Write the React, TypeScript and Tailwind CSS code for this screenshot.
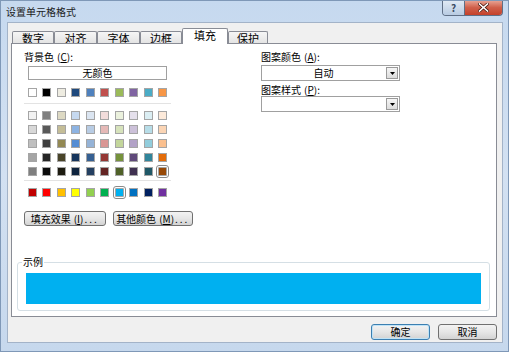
import React from 'react';

// Office 2007 theme palette, as shown in the fill tab
const themeRow = ['#ffffff', '#000000', '#eeece1', '#1f497d', '#4f81bd', '#c0504d', '#9bbb59', '#8064a2', '#4bacc6', '#f79646'];

const tintRows = [
  ['#f2f2f2', '#7f7f7f', '#ddd9c3', '#c6d9f0', '#dbe5f1', '#f2dcdb', '#ebf1dd', '#e5e0ec', '#dbeef3', '#fdeada'],
  ['#d8d8d8', '#595959', '#c4bd97', '#8db3e2', '#b8cce4', '#e5b9b7', '#d7e3bc', '#ccc1d9', '#b7dde8', '#fbd5b5'],
  ['#bfbfbf', '#3f3f3f', '#938953', '#548dd4', '#95b3d7', '#d99694', '#c3d69b', '#b2a2c7', '#92cddc', '#fac08f'],
  ['#a5a5a5', '#262626', '#494429', '#17365d', '#366092', '#953734', '#76923c', '#5f497a', '#31859b', '#e36c09'],
  ['#7f7f7f', '#0c0c0c', '#1d1b10', '#0f243e', '#244061', '#632423', '#4f6128', '#3f3151', '#205867', '#974806'],
];

const standardRow = ['#c00000', '#ff0000', '#ffc000', '#ffff00', '#92d050', '#00b050', '#00b0f0', '#0070c0', '#002060', '#7030a0'];

const tabs = ['数字', '对齐', '字体', '边框', '填充', '保护'];
const tabWidths = ['w-[42px]', 'w-[43px]', 'w-[43px]', 'w-[42px]', 'w-[46px]', 'w-[40px]'];

const Swatch = ({ color, selected }: { color: string; selected?: boolean }) => (
  <span
    className={
      'block w-[9px] h-[9px] border border-[#a5a5a5] ' +
      (selected ? 'outline outline-1 outline-offset-1 outline-[#8a8a8a] rounded-[1px]' : '')
    }
    style={{ backgroundColor: color }}
  />
);

const SwatchRow = ({ colors, selected }: { colors: string[]; selected?: number }) => (
  <div className="flex justify-between w-[139px]">
    {colors.map((c, i) => (
      <Swatch key={i} color={c} selected={i === selected} />
    ))}
  </div>
);

// mnemonic like "(C)" with the letter underlined
const Key = ({ k }: { k: string }) => (
  <span className="ml-[3px]">
    (<u>{k}</u>)
  </span>
);

const WinButton = ({ children, className = '', isDefault = false }: { children: React.ReactNode; className?: string; isDefault?: boolean }) => (
  <div
    className={
      'flex items-center justify-center rounded-[3px] border bg-gradient-to-b from-[#f3f3f3] via-[#e6e6e6] to-[#d3d3d3] leading-none ' +
      (isDefault ? 'border-[#3c7fb1] shadow-[inset_0_0_0_1px_#bfe3f7] ' : 'border-[#707070] ') +
      className
    }
  >
    {children}
  </div>
);

const Combo = ({ value }: { value: string }) => (
  <div className="flex h-[16px] w-[139px] border border-[#a0a0a0] bg-white">
    <div className="flex-1 flex items-center justify-center leading-none">{value}</div>
    <div className="m-px w-[12px] flex items-center justify-center border border-[#9a9a9a] bg-gradient-to-b from-[#f6f6f6] to-[#dcdcdc]">
      <svg width="5" height="3" viewBox="0 0 5 3">
        <path d="M0 0h5L2.5 3z" fill="#000" />
      </svg>
    </div>
  </div>
);

export default function App() {
  return (
    <div className="w-[509px] h-[352px] flex flex-col border border-[#7f98b7] bg-gradient-to-b from-[#c6d9ef] via-[#d3e1f2] to-[#c6d8ed] text-[10px] text-black font-['Noto_Sans_CJK_SC',sans-serif] overflow-hidden">
      {/* Title bar */}
      <div className="flex items-start h-[21px]">
        <div className="pl-[5px] pt-[5px] text-[10px] leading-[12px] text-[#1c1c1c]">设置单元格格式</div>
        <div className="ml-auto mr-[5px] -mt-px flex h-[16px] border border-t-0 border-[#5f6f86] rounded-b-[4px] overflow-hidden">
          <div className="w-[22px] flex items-center justify-center bg-gradient-to-b from-[#e2ebf5] to-[#b8cbe2] border-r border-[#5f6f86] text-[10px] font-bold text-[#3a4a62] leading-none">
            ?
          </div>
          <div className="w-[37px] flex items-center justify-center bg-gradient-to-b from-[#e9a99b] via-[#d0604b] to-[#c4402a]">
            <svg width="11" height="9" viewBox="0 0 11 9">
              <path d="M1.5 1l8 7M9.5 1l-8 7" stroke="#4a1a12" strokeWidth="3" strokeLinecap="square" />
              <path d="M1.5 1l8 7M9.5 1l-8 7" stroke="#fff" strokeWidth="1.6" strokeLinecap="square" />
            </svg>
          </div>
        </div>
      </div>

      {/* Client area */}
      <div className="flex-1 ml-[6px] mr-[5px] mb-[8px] flex flex-col border border-[#a3b3c8] bg-[#f0f0f0] pt-[5px] pl-[3px]">
        {/* Tabs */}
        <div className="flex items-end h-[16px] pl-px">
          {tabs.map((t, i) =>
            i === 4 ? (
              <div
                key={t}
                className={tabWidths[i] + ' relative z-10 h-[16px] flex items-center justify-center pb-[3px] border border-b-0 border-[#898c95] rounded-t-[2px] bg-white text-[11px] leading-none'}
              >
                {t}
              </div>
            ) : (
              <div
                key={t}
                className={tabWidths[i] + ' h-[13px] flex items-center justify-center border border-b-0 border-[#898c95] rounded-t-[2px] bg-gradient-to-b from-[#f6f6f6] to-[#e2e2e2] text-[11px] leading-none'}
              >
                {t}
              </div>
            )
          )}
        </div>

        {/* Tab panel */}
        <div className="-mt-px w-[486px] h-[274px] flex flex-col border border-[#898c95] bg-white">
          <div className="flex pt-[6px] pl-[12px]">
            {/* Background colour */}
            <div className="w-[169px] flex flex-col">
              <div className="h-[14px] leading-[14px]">
                背景色<Key k="C" />:
              </div>
              <div className="ml-[4px] mt-[2px] w-[139px] h-[14px] flex items-center justify-center border border-[#a0a0a0] bg-white leading-none">
                无颜色
              </div>
              <div className="ml-[4px] mt-[8px]">
                <SwatchRow colors={themeRow} />
              </div>
              <div className="mt-[6px] h-px w-[147px] bg-[#e3e3e3]" />
              <div className="ml-[4px] mt-[7px] flex flex-col gap-[5px]">
                {tintRows.map((row, r) => (
                  <SwatchRow key={r} colors={row} selected={r === 4 ? 9 : undefined} />
                ))}
              </div>
              <div className="mt-[4px] h-px w-[147px] bg-[#e3e3e3]" />
              <div className="ml-[4px] mt-[7px]">
                <SwatchRow colors={standardRow} selected={6} />
              </div>
              <div className="mt-[14px] flex gap-[7px]">
                <WinButton className="w-[82px] h-[15px]">
                  填充效果<Key k="I" />
                  <span className="tracking-[2px] ml-px">...</span>
                </WinButton>
                <WinButton className="w-[81px] h-[15px]">
                  其他颜色<Key k="M" />
                  <span className="tracking-[2px] ml-px">...</span>
                </WinButton>
              </div>
            </div>

            {/* Pattern */}
            <div className="ml-[68px] w-[139px] flex flex-col">
              <div className="h-[13px] leading-[13px]">
                图案颜色<Key k="A" />:
              </div>
              <div className="mt-[2px]">
                <Combo value="自动" />
              </div>
              <div className="mt-[2px] h-[13px] leading-[13px]">
                图案样式<Key k="P" />:
              </div>
              <div>
                <Combo value="" />
              </div>
            </div>
          </div>

          {/* Sample */}
          <fieldset className="mt-auto ml-[5px] mb-[5px] w-[473px] border border-[#d5dfe5] rounded-[3px]">
            <legend className="ml-[4px] px-px h-[12px] leading-[12px] text-[10px]">示例</legend>
            <div className="mx-[8px] mt-[5px] mb-[6px] h-[31px] bg-[#00b0f0]" />
          </fieldset>
        </div>

        {/* Dialog buttons */}
        <div className="mt-[7px] flex justify-end gap-[8px] pr-[5px]">
          <WinButton isDefault className="w-[59px] h-[16px]">
            确定
          </WinButton>
          <WinButton className="w-[59px] h-[16px]">取消</WinButton>
        </div>
      </div>
    </div>
  );
}
